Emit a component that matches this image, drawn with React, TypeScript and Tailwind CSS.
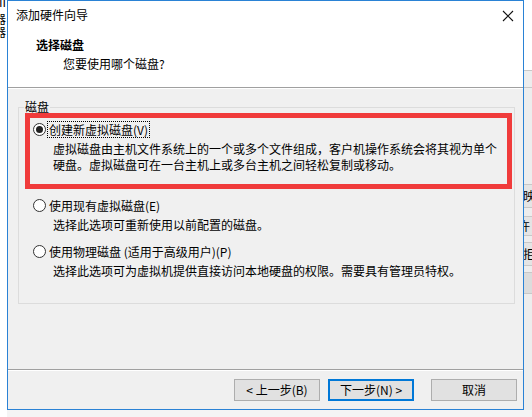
import type { ReactNode } from "react";

const font = { fontFamily: '"Noto Sans CJK SC", "Noto Sans", sans-serif' };

export default function App() {
  return (
    <div
      className="flex h-[417px] w-[532px] flex-col overflow-hidden bg-[#f7f7f7] text-[12px] leading-[16px] text-black"
      style={font}
    >
      <div className="flex h-[410px] shrink-0">
        <LeftStrip />
        <Dialog />
        <RightStrip />
      </div>
      <div className="flex h-[7px]">
        <div className="w-[7px] bg-white" />
        <div className="flex-1 bg-[#f4f4f4]" />
      </div>
    </div>
  );
}

function LeftStrip() {
  return (
    <div className="flex w-[7px] shrink-0 flex-col overflow-hidden bg-white">
      <span className="-ml-[1px] -mt-[5px] h-[14px] text-[12px] leading-[14px]">II</span>
      <span className="-ml-[6px] mt-[3px] h-[13px] text-[12px] leading-[13px]">器</span>
      <span className="-ml-[6px] h-[13px] text-[12px] leading-[13px]">器</span>
    </div>
  );
}

function RightStrip() {
  return (
    <div className="flex w-[8px] shrink-0 flex-col overflow-hidden bg-[#ededed]">
      <div className="h-[70px] bg-white" />
      <div className="h-[1px] bg-[#c8c8c8]" />
      <div className="h-[16px]" />
      <div className="h-[1px] bg-[#c8c8c8]" />
      <div className="h-[96px]" />
      <div className="flex h-[24px] items-center border-y border-[#c8c8c8] bg-[#e4e4e4]">
        <span className="-ml-[1px] text-[12px]">映</span>
      </div>
      <div className="h-[8px]" />
      <div className="flex h-[20px] items-center border-y border-[#c8c8c8] bg-[#e4e4e4]">
        <span className="-ml-[6px] text-[12px]">许</span>
      </div>
      <div className="h-[6px]" />
      <div className="flex h-[24px] items-center border-y border-[#c8c8c8] bg-[#e4e4e4]">
        <span className="-ml-[1px] text-[12px]">拒</span>
      </div>
      <div className="h-[6px]" />
      <div className="h-[22px] border-y border-[#c8c8c8] bg-[#dcdcdc]" />
    </div>
  );
}

function Dialog() {
  return (
    <div className="flex w-[517px] shrink-0 flex-col border border-[#2a82d5] bg-[#f0f0f0]">
      <div className="flex h-[86px] flex-col bg-white">
        <div className="flex h-[28px] items-center justify-between pl-[8px] pr-[9px]">
          <span>添加硬件向导</span>
          <svg width="12" height="12" viewBox="0 0 12 12" className="mt-[1px]">
            <path d="M1 1 L11 11 M11 1 L1 11" stroke="#111" strokeWidth="1.1" />
          </svg>
        </div>
        <div className="pl-[28px] pt-[8px] font-bold">选择磁盘</div>
        <div className="mt-[3px] pl-[55px]">您要使用哪个磁盘?</div>
      </div>
      <div className="h-[1px] bg-[#a0a0a0]" />
      <div className="h-[1px] bg-white" />

      <div className="relative ml-[10px] mr-[8px] mt-[18px] h-[197px] border border-[#dcdcdc]">
        <span className="absolute -top-[9px] left-[5px] bg-[#f0f0f0] px-[1px]">磁盘</span>
        <div className="absolute left-[6px] top-[5px] h-[76px] w-[487px] border-[5px] border-[#f03b3b]" />

        <div className="flex flex-col pl-[14px] pt-[13px]">
          <Radio checked focused>
            创建新虚拟磁盘(V)
          </Radio>
          <Desc className="mt-[4px]">
            虚拟磁盘由主机文件系统上的一个或多个文件组成，客户机操作系统会将其视为单个
            <br />
            硬盘。虚拟磁盘可在一台主机上或多台主机之间轻松复制或移动。
          </Desc>

          <div className="mt-[24px]">
            <Radio>使用现有虚拟磁盘(E)</Radio>
          </div>
          <Desc className="mt-[4px]">选择此选项可重新使用以前配置的磁盘。</Desc>

          <div className="mt-[10px]">
            <Radio>使用物理磁盘 (适用于高级用户)(P)</Radio>
          </div>
          <Desc className="mt-[4px]">
            选择此选项可为虚拟机提供直接访问本地硬盘的权限。需要具有管理员特权。
          </Desc>
        </div>
      </div>

      <div className="mt-[65px] h-[1px] bg-[#a0a0a0]" />
      <div className="h-[1px] bg-white" />
      <div className="mt-[8px] flex justify-end gap-[8px] pr-[6px]">
        <Button>&lt; 上一步(B)</Button>
        <Button primary>下一步(N) &gt;</Button>
        <div className="w-[1px]" />
        <Button>取消</Button>
      </div>
    </div>
  );
}

function Radio({
  children,
  checked = false,
  focused = false,
}: {
  children: ReactNode;
  checked?: boolean;
  focused?: boolean;
}) {
  return (
    <div className="flex h-[16px] items-center">
      <span className="flex h-[13px] w-[13px] shrink-0 items-center justify-center rounded-full border border-[#333] bg-white">
        {checked ? <span className="h-[7px] w-[7px] rounded-full bg-[#222]" /> : null}
      </span>
      <span
        className={`ml-[1px] border px-[1px] leading-[15px] ${
          focused ? "border-dotted border-black" : "border-transparent"
        }`}
      >
        {children}
      </span>
    </div>
  );
}

function Desc({ children, className = "" }: { children: ReactNode; className?: string }) {
  return <p className={`pl-[20px] ${className}`}>{children}</p>;
}

function Button({ children, primary = false }: { children: ReactNode; primary?: boolean }) {
  return (
    <div
      className={`flex h-[22px] w-[86px] items-center justify-center bg-[#e1e1e1] ${
        primary ? "border-2 border-[#0078d7]" : "border border-[#adadad]"
      }`}
    >
      {children}
    </div>
  );
}
